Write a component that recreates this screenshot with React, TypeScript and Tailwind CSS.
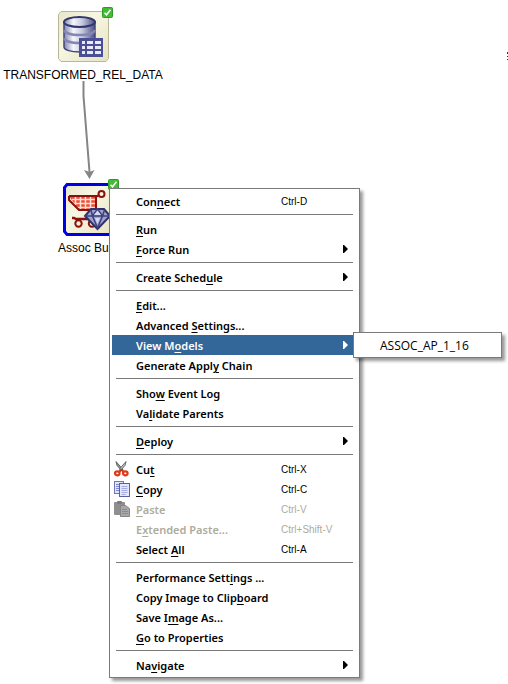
import React from "react";

type Item = {
  label: string;
  key?: number;
  shortcut?: string;
  sub?: boolean;
  disabled?: boolean;
  active?: boolean;
  icon?: React.ReactNode;
};

function CutIcon() {
  return (
    <svg width="16" height="16" viewBox="0 0 16 16" fill="none" aria-hidden="true">
      <path d="M2 0.500l1 4 4.500 5 1.500-1z" fill="#8b9497" stroke="#4c5457" strokeWidth="0.800" />
      <path d="M12 0.500l-1 4-4.500 5-1-1.500z" fill="#b9c1c3" stroke="#4c5457" strokeWidth="0.800" />
      <path d="M7.500 8.500l-2.500 2.500M7 8.500l3 2.500" stroke="#c8321a" strokeWidth="2" />
      <ellipse cx="3.300" cy="12.300" rx="2.300" ry="2" stroke="#dc3a1c" strokeWidth="2.200" />
      <ellipse cx="11.300" cy="12.300" rx="2.300" ry="2" stroke="#dc3a1c" strokeWidth="2.200" />
    </svg>
  );
}

function CopyIcon() {
  return (
    <svg width="16" height="16" viewBox="0 0 16 16" fill="none" aria-hidden="true">
      <rect x="0.500" y="0.500" width="9" height="12" fill="#dfe4fb" stroke="#7077b8" />
      <path d="M2 3.500h4M2 5.500h4M2 7.500h4M2 9.500h4" stroke="#7e88cc" />
      <rect x="5.500" y="2.500" width="10" height="13" fill="#e3e8ff" stroke="#5a60a4" />
      <path d="M7.500 5.500h6M7.500 7.500h6M7.500 9.500h6M7.500 11.500h6M7.500 13.500h4" stroke="#a3abdf" />
    </svg>
  );
}

function PasteIcon() {
  return (
    <svg width="16" height="16" viewBox="0 0 16 16" fill="none" aria-hidden="true">
      <rect x="0" y="1" width="11" height="13" rx="1" fill="#8f8f8f" />
      <rect x="3" y="0" width="5" height="3" rx="1" fill="#7c7c7c" />
      <path d="M6.500 4.500h5l4 3v8h-9z" fill="#a8a8a8" stroke="#868686" />
      <path d="M8 8.500h5M8 10.500h6M8 12.500h6" stroke="#8c8c8c" />
    </svg>
  );
}

const groups: Item[][] = [
  [{ label: "Connect", key: 3, shortcut: "Ctrl-D" }],
  [
    { label: "Run", key: 0 },
    { label: "Force Run", key: 0, sub: true },
  ],
  [{ label: "Create Schedule", key: 12, sub: true }],
  [
    { label: "Edit...", key: 0 },
    { label: "Advanced Settings...", key: 9 },
    { label: "View Models", key: 6, sub: true, active: true },
    { label: "Generate Apply Chain", key: 13 },
  ],
  [
    { label: "Show Event Log", key: 3 },
    { label: "Validate Parents", key: 2 },
  ],
  [{ label: "Deploy", key: 0, sub: true }],
  [
    { label: "Cut", key: 2, shortcut: "Ctrl-X", icon: <CutIcon /> },
    { label: "Copy", key: 0, shortcut: "Ctrl-C", icon: <CopyIcon /> },
    { label: "Paste", key: 0, shortcut: "Ctrl-V", icon: <PasteIcon />, disabled: true },
    { label: "Extended Paste...", key: 1, shortcut: "Ctrl+Shift-V", disabled: true },
    { label: "Select All", key: 7, shortcut: "Ctrl-A" },
  ],
  [
    { label: "Performance Settings ...", key: 16 },
    { label: "Copy Image to Clipboard", key: 18 },
    { label: "Save Image As...", key: 6 },
    { label: "Go to Properties", key: 0 },
  ],
  [{ label: "Navigate", key: 2, sub: true }],
];

function Label({ text, at }: { text: string; at?: number }) {
  if (at === undefined) return <>{text}</>;
  return (
    <>
      {text.slice(0, at)}
      <span className="underline decoration-1 underline-offset-2">{text[at]}</span>
      {text.slice(at + 1)}
    </>
  );
}

function MenuRow({ item }: { item: Item }) {
  return (
    <button
      type="button"
      role="menuitem"
      disabled={item.disabled}
      aria-haspopup={item.sub ? "menu" : undefined}
      className={`flex h-5 w-full items-center text-left ${
        item.active ? "bg-[#336699] text-white" : item.disabled ? "text-[#acac9c]" : "text-black"
      }`}
    >
      <span className="flex w-6 shrink-0 items-center pl-0.5">{item.icon}</span>
      <span className="flex-1 pt-0.5 leading-4 whitespace-nowrap">
        <Label text={item.label} at={item.key} />
      </span>
      {item.shortcut && (
        <span className="w-[76px] font-['Liberation_Sans',Arial,sans-serif] text-[10px] font-normal whitespace-nowrap">
          {item.shortcut}
        </span>
      )}
      {item.sub && (
        <svg className="mr-2" width="6" height="8" viewBox="0 0 6 8" aria-hidden="true">
          <path d="M0 0h1l4 4-4 4H0z" fill="currentColor" />
        </svg>
      )}
    </button>
  );
}

function CheckBadge() {
  return (
    <svg className="absolute -top-1 -right-1" width="11" height="11" viewBox="0 0 11 11" aria-hidden="true">
      <rect x="0.500" y="0.500" width="10" height="10" rx="1" fill="#45ba37" stroke="#2f9a27" />
      <path d="M2.500 5.800l2 2 4-5" stroke="#fff" strokeWidth="1.500" fill="none" />
    </svg>
  );
}

function TableIcon() {
  return (
    <svg width="51" height="51" viewBox="0 0 51 51" fill="none" aria-hidden="true">
      <defs>
        <linearGradient id="tile" x1="0" y1="0" x2="1" y2="1">
          <stop offset="0" stopColor="#e9e7c8" />
          <stop offset="0.400" stopColor="#f7f6e2" />
          <stop offset="1" stopColor="#e6e3c2" />
        </linearGradient>
        <linearGradient id="drum" x1="0" y1="0" x2="1" y2="0">
          <stop offset="0" stopColor="#8286b0" />
          <stop offset="0.300" stopColor="#f6f7fc" />
          <stop offset="0.600" stopColor="#c3c6dd" />
          <stop offset="1" stopColor="#4a4f86" />
        </linearGradient>
      </defs>
      <path d="M3 0.500h45l2.500 3v44l-2.500 3H3l-2.500-3v-44z" fill="url(#tile)" stroke="#b9b79a" />
      <path d="M6 11v25c0 3 7 5 16 5s15-2 15-5V11z" fill="url(#drum)" stroke="#41457c" strokeWidth="1.500" />
      <path d="M6 19c1 3 7 5 16 5s14-2 15-5M6 27c1 3 7 5 16 5s14-2 15-5" stroke="#8487b2" strokeWidth="2.500" />
      <ellipse cx="21.500" cy="11" rx="15.500" ry="5" fill="url(#drum)" stroke="#33376c" strokeWidth="2" />
      <rect x="21" y="27" width="24" height="19" fill="#4b5094" />
      <path d="M24 30h3v3h-3zM24 35h3v3h-3zM24 40h3v3h-3zM29 30h6v3h-6zM37 30h6v3h-6zM29 35h6v3h-6zM37 35h6v3h-6zM29 40h6v3h-6zM37 40h6v3h-6z" fill="#e8eafb" />
    </svg>
  );
}

function CartIcon() {
  return (
    <svg width="53" height="53" viewBox="0 0 53 53" fill="none" aria-hidden="true">
      <path d="M5 1.500h44l2.500 3v44l-2.500 3H5l-2.500-3v-44z" fill="url(#tile)" stroke="#0000e0" strokeWidth="3" />
      <path d="M7 13h28l-1 14H17z" fill="#ee4a34" />
      <path d="M10 16.500h24M12 20.500h22M14 24.500h20M13.500 14v8M18.500 14v12M23.500 14v12M28.500 14v12" stroke="#ffe3d4" strokeWidth="1.500" />
      <path d="M7 13h28M7 13v4l10 10h17M34 27V14l3-2" stroke="#8c100c" strokeWidth="2" />
      <circle cx="39.500" cy="11" r="3" stroke="#8c100c" strokeWidth="2" />
      <path d="M10 35h2l2 1h14" stroke="#8c100c" strokeWidth="2.500" />
      <circle cx="16.500" cy="40.500" r="3.200" stroke="#8c100c" strokeWidth="2" />
      <circle cx="30" cy="40.500" r="3.200" stroke="#8c100c" strokeWidth="2" />
      <path d="M29 26h13l6 7-12.500 13L23 33z" fill="#9ea2cc" stroke="#2f3268" strokeWidth="2" />
      <path d="M23 33h25M30.500 33l5 12 5-12M29 27l1.500 6 5-7 5 7 2-6" stroke="#3c4080" strokeWidth="1.500" />
      <path d="M32 32l3.500-4.500L39 32zM33 35h5l-2.500 6z" fill="#d5d8ef" />
    </svg>
  );
}

export default function App() {
  return (
    <main className="relative min-h-screen overflow-hidden bg-white font-['Liberation_Sans',Arial,sans-serif] text-[12px] text-black">
      <svg className="absolute top-0 left-0" width="120" height="184" viewBox="0 0 120 184" aria-hidden="true">
        <path d="M83.500 81v15l6 76" fill="none" stroke="#858585" strokeWidth="2" />
        <path d="M84 170l5.500 2 5-2-5 9z" fill="#858585" />
      </svg>
      <div className="absolute top-[11px] left-0 flex w-[166px] flex-col items-center gap-[5px]">
        <div className="relative">
          <TableIcon />
          <CheckBadge />
        </div>
        <span className="leading-4">TRANSFORMED_REL_DATA</span>
      </div>
      <div className="absolute top-[183px] left-[58px] flex flex-col gap-1">
        <div className="relative ml-1 w-[53px]">
          <CartIcon />
          <CheckBadge />
        </div>
        <span className="leading-4">Assoc Build</span>
      </div>
      <svg className="absolute top-[52px] right-0" width="1" height="9" viewBox="0 0 1 9" aria-hidden="true">
        <path d="M0 0h1v2H0zM0 4h1v1H0zM0 7h1v1H0z" fill="#333" />
      </svg>

      <div
        role="menu"
        className="absolute top-[188px] left-[109px] w-[251px] border border-[#7a7a7a] bg-white p-0.5 font-['Noto_Sans','Open_Sans',sans-serif] text-[11px] font-semibold shadow-[3px_3px_3px_rgba(0,0,0,0.4)]"
      >
        {groups.map((group, i) => (
          <React.Fragment key={i}>
            {i > 0 && (
              <div role="separator" className="h-2 px-1 pt-[3px]">
                <div className="h-px bg-[#7a7a7a]" />
              </div>
            )}
            {group.map((item) => (
              <MenuRow key={item.label} item={item} />
            ))}
          </React.Fragment>
        ))}
      </div>
      <div
        role="menu"
        className="absolute top-[332px] left-[353px] w-[149px] border border-[#7a7a7a] bg-white p-0.5 font-['Open_Sans','Noto_Sans',sans-serif] shadow-[3px_3px_3px_rgba(0,0,0,0.4)]"
      >
        <button type="button" role="menuitem" className="flex h-5 w-full items-center pt-0.5 pl-6 text-left">
          ASSOC_AP_1_16
        </button>
      </div>
    </main>
  );
}
